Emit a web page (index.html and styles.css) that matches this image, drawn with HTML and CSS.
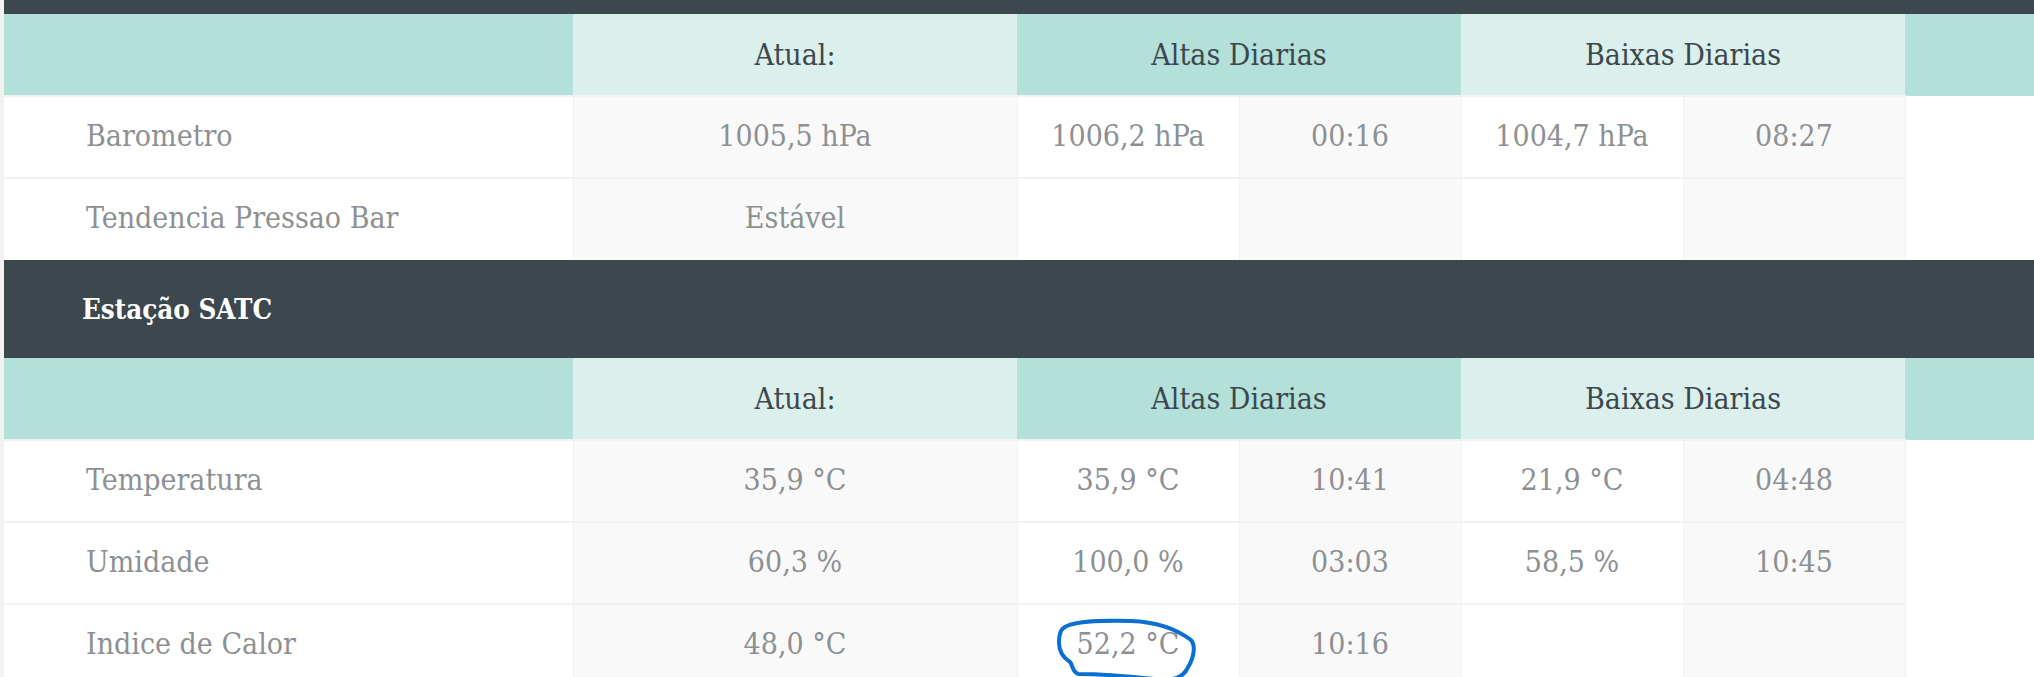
FILE: index.html
```html
<!DOCTYPE html>
<html lang="pt">
<head>
<meta charset="utf-8">
<title>Estação</title>
<link rel="stylesheet" href="styles.css">
</head>
<body>
<div class="page">
  <section class="station station-first">
    <div class="station-bar"></div>
    <table class="wx">
      <colgroup>
        <col class="c-label"><col class="c-now"><col class="c-half"><col class="c-half"><col class="c-half"><col class="c-half"><col class="c-rest">
      </colgroup>
      <thead>
        <tr>
          <th class="h-dark"></th>
          <th class="h-light">Atual:</th>
          <th class="h-dark" colspan="2">Altas Diarias</th>
          <th class="h-light" colspan="2">Baixas Diarias</th>
          <th class="h-dark"></th>
        </tr>
      </thead>
      <tbody>
        <tr>
          <td class="label">Barometro</td>
          <td class="alt">1005,5 hPa</td>
          <td>1006,2 hPa</td>
          <td class="alt">00:16</td>
          <td>1004,7 hPa</td>
          <td class="alt">08:27</td>
          <td class="rest"></td>
        </tr>
        <tr>
          <td class="label">Tendencia Pressao Bar</td>
          <td class="alt">Estável</td>
          <td></td>
          <td class="alt"></td>
          <td></td>
          <td class="alt"></td>
          <td class="rest"></td>
        </tr>
      </tbody>
    </table>
  </section>

  <section class="station">
    <div class="station-bar"><h2 class="station-title">Estação SATC</h2></div>
    <table class="wx">
      <colgroup>
        <col class="c-label"><col class="c-now"><col class="c-half"><col class="c-half"><col class="c-half"><col class="c-half"><col class="c-rest">
      </colgroup>
      <thead>
        <tr>
          <th class="h-dark"></th>
          <th class="h-light">Atual:</th>
          <th class="h-dark" colspan="2">Altas Diarias</th>
          <th class="h-light" colspan="2">Baixas Diarias</th>
          <th class="h-dark"></th>
        </tr>
      </thead>
      <tbody>
        <tr>
          <td class="label">Temperatura</td>
          <td class="alt">35,9 °C</td>
          <td>35,9 °C</td>
          <td class="alt">10:41</td>
          <td>21,9 °C</td>
          <td class="alt">04:48</td>
          <td class="rest"></td>
        </tr>
        <tr>
          <td class="label">Umidade</td>
          <td class="alt">60,3 %</td>
          <td>100,0 %</td>
          <td class="alt">03:03</td>
          <td>58,5 %</td>
          <td class="alt">10:45</td>
          <td class="rest"></td>
        </tr>
        <tr>
          <td class="label">Indice de Calor</td>
          <td class="alt">48,0 °C</td>
          <td class="marked">52,2 °C
            <svg class="scribble" viewBox="0 0 150 72" width="150" height="72" aria-hidden="true">
              <path d="M10 18 C 14 9, 40 7, 80 8 C 108 9, 128 18, 140 27 C 145 33, 143 45, 136 56 C 132 64, 124 67, 112 67 C 92 65, 62 61, 28 61 C 21 60, 22 52, 19 49 C 13 45, 8 40, 8 30 C 8 24, 9 20, 10 18 Z" fill="none" stroke="#0b6fd1" stroke-width="4" stroke-linejoin="round" stroke-linecap="round"/>
            </svg>
          </td>
          <td class="alt">10:16</td>
          <td></td>
          <td class="alt"></td>
          <td class="rest"></td>
        </tr>
      </tbody>
    </table>
  </section>
</div>
</body>
</html>
```

FILE: styles.css
```css
html, body {
  margin: 0;
  padding: 0;
  background: #f2f2f2;
}

body {
  font-family: "DejaVu Serif", "Liberation Serif", serif;
  font-stretch: condensed;
  overflow: hidden;
}

.page {
  padding-left: 4px;
  background: #f2f2f2;
}

.station-first {
  margin-top: -84px;
}

.station-bar {
  height: 98px;
  background: #3c474e;
  display: flex;
  align-items: center;
  padding-left: 78px;
  box-sizing: border-box;
}

.station-title {
  margin: 0;
  color: #ffffff;
  font-size: 27.5px;
  font-weight: bold;
  letter-spacing: 0;
}

.wx {
  width: 2030px;
  border-collapse: collapse;
  table-layout: fixed;
  background: #ffffff;
}

.c-label { width: 569px; }
.c-now { width: 444px; }
.c-half { width: 222px; }

.wx th {
  height: 81px;
  padding: 0;
  font-weight: normal;
  font-size: 30px;
  color: #3b474d;
  text-align: center;
  vertical-align: middle;
}

.h-dark { background: #b3e1d9; }
.h-light { background: #dbf0ec; }

.wx td {
  height: 82px;
  padding: 0 0 4px;
  box-sizing: border-box;
  font-size: 30px;
  color: #8d9092;
  text-align: center;
  vertical-align: middle;
  border-top: 2px solid #f2f2f2;
  border-left: 1px solid #f2f2f2;
  background: #ffffff;
}

.wx td.label {
  text-align: left;
  padding-left: 82px;
  border-left: none;
}

.wx td.alt { background: #f9f9f9; }

.wx td.rest {
  border-top: none;
  border-left: 1px solid #f2f2f2;
  background: #ffffff;
}

.marked { position: relative; }

.scribble {
  position: absolute;
  left: 33px;
  top: 8px;
  pointer-events: none;
}
```
